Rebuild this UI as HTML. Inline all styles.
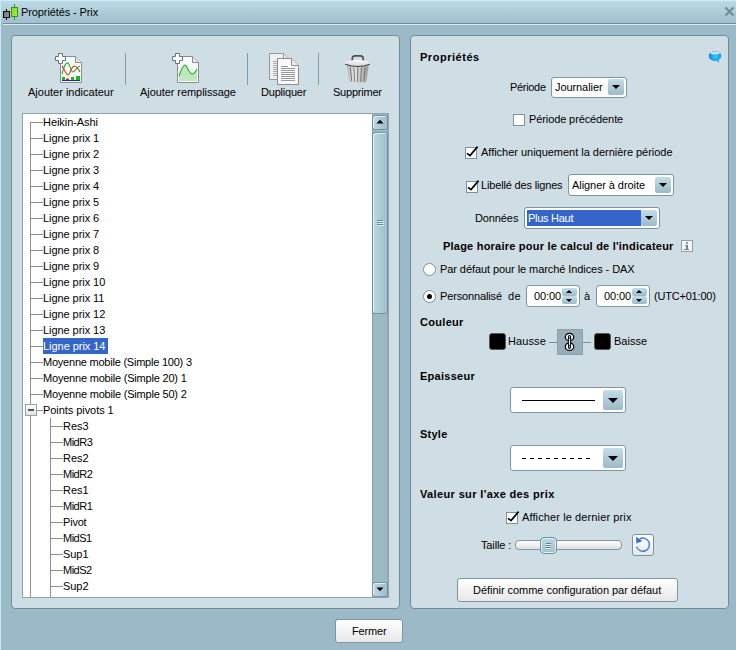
<!DOCTYPE html>
<html><head><meta charset="utf-8"><title>Propriétés - Prix</title>
<style>
html,body{margin:0;padding:0}
body{width:736px;height:650px;overflow:hidden;position:relative;background:#9bb9c7;font-family:"Liberation Sans",sans-serif;font-size:11px;color:#000}
.a{position:absolute;box-sizing:border-box}
.t{position:absolute;white-space:pre;font-size:11px;line-height:13px;color:#000}
.panel{position:absolute;box-sizing:border-box;background:#cfdde4;border:1px solid #718c98;border-radius:4px}
.combo{position:absolute;box-sizing:border-box;background:#fff;border:1px solid #7d959f;border-radius:3px}
.cbtn{position:absolute;box-sizing:border-box;background:linear-gradient(#c3dde8,#9cbac7);border-radius:2px}
.tri{position:absolute;width:0;height:0;border-left:4px solid transparent;border-right:4px solid transparent;border-top:4px solid #000}
.chk{position:absolute;box-sizing:border-box;width:12px;height:12px;background:#fff;border:1px solid #7a929c}
.radio{position:absolute;box-sizing:border-box;width:13px;height:13px;background:#fff;border:1px solid #7890a0;border-radius:50%}
.sep{position:absolute;width:1px;background:#7f9aa6}
.hl{position:absolute;height:1px;background:#8f8f8f}
.vl{position:absolute;width:1px;background:#8f8f8f}
.btn{position:absolute;box-sizing:border-box;border:1px solid #7e96a1;border-radius:3px;background:linear-gradient(#ffffff,#e8e8e8)}
.sbtn{position:absolute;box-sizing:border-box;border:1px solid #7592a0;border-radius:3px;background:linear-gradient(90deg,#bcd9e5,#9ebdca);box-shadow:inset 1px 1px 0 #dcf1f9}
</style></head><body>
<!-- title bar -->
<div class="a" style="left:0;top:0;width:736px;height:23px;background:linear-gradient(#bcdbe7,#a0bfcc)"></div>
<div class="a" style="left:0;top:0;width:736px;height:1px;background:#cdeefa"></div>
<div class="a" style="left:3px;top:23px;width:733px;height:1px;background:#6f8e9b"></div>
<div class="a" style="left:3px;top:24px;width:733px;height:1px;background:#d8f0f8"></div>
<div class="a" style="left:0;top:0;width:1px;height:650px;background:#c8eaf6"></div>
<svg class="a" style="left:0;top:0" width="22" height="22" viewBox="0 0 22 22">
 <defs><linearGradient id="gc" x1="0" y1="0" x2="1" y2="1"><stop offset="0" stop-color="#6a6a6a"/><stop offset="1" stop-color="#a0a0a0"/></linearGradient>
 <linearGradient id="gg" x1="0" y1="0" x2="1" y2="1"><stop offset="0" stop-color="#80d820"/><stop offset="1" stop-color="#a8f048"/></linearGradient></defs>
 <line x1="6.5" y1="9" x2="6.5" y2="20" stroke="#000" stroke-width="1"/>
 <rect x="3.5" y="11.5" width="6" height="6" fill="url(#gc)" stroke="#0a0a0a"/>
 <line x1="14.5" y1="4" x2="14.5" y2="20" stroke="#3a9410" stroke-width="1"/>
 <rect x="11.5" y="7.5" width="6" height="9" fill="url(#gg)" stroke="#3a9410"/>
</svg>
<svg class="a" style="left:722px;top:4px" width="14" height="16" viewBox="0 0 14 16">
 <path d="M3.5 3.5 L11.5 11.5 M11.5 3.5 L3.5 11.5" stroke="#6d8a96" stroke-width="2"/>
</svg>

<!-- panels -->
<div class="panel" style="left:11px;top:35px;width:389px;height:574px"></div>
<div class="panel" style="left:410px;top:35px;width:319px;height:574px"></div>

<!-- toolbar separators -->
<div class="sep" style="left:125px;top:53px;height:32px"></div>
<div class="sep" style="left:247px;top:53px;height:32px"></div>
<div class="sep" style="left:318px;top:53px;height:32px"></div>

<!-- icon: add indicator -->
<svg class="a" style="left:50px;top:50px" width="36" height="36" viewBox="50 50 36 36">
 <path d="M60.5 56.5 H75.5 L81.5 62.5 V82.5 H60.5 Z" fill="#fafafa" stroke="#8c8c8c"/>
 <path d="M75.5 56.5 V62.5 H81.5" fill="#e8e8e8" stroke="#8c8c8c"/>
 <path d="M62 74 C64 66,66 62,68 63 C70 64,71 72,73 72 C75 72,77 67,80 66" fill="none" stroke="#22b022" stroke-width="1.1"/>
 <path d="M62 66 C64 68,66 75,68 75 C70 75,71 67,74 66 C77 66,79 70,80 72" fill="none" stroke="#d23a3a" stroke-width="1.1"/>
 <rect x="62" y="77" width="3" height="3" fill="#10c010"/>
 <rect x="66" y="78.5" width="3" height="1.5" fill="#e02020"/>
 <rect x="71" y="77" width="3" height="3" fill="#10c010"/>
 <rect x="76" y="76" width="4" height="4" fill="#10c010"/>
 <rect x="62" y="80" width="18" height="1" fill="#2020e0"/>
 <path d="M58.5 53.5 H62.5 V56.5 H65.5 V60.5 H62.5 V63.5 H58.5 V60.5 H55.5 V56.5 H58.5 Z" fill="#fff" stroke="#5f7480" stroke-width="1"/>
</svg>
<!-- icon: add fill -->
<svg class="a" style="left:168px;top:50px" width="36" height="36" viewBox="168 50 36 36">
 <path d="M177.5 56.5 H192.5 L198.5 62.5 V82.5 H177.5 Z" fill="#fafafa" stroke="#8c8c8c"/>
 <path d="M192.5 56.5 V62.5 H198.5" fill="#e8e8e8" stroke="#8c8c8c"/>
 <path d="M179 76 C181 70,183 65,185 65 C187 65,189 74,192 74 C194 74,196 71,197 69 V81 H179 Z" fill="#bfe8bf"/>
 <path d="M179 76 C181 70,183 65,185 65 C187 65,189 74,192 74 C194 74,196 71,197 69" fill="none" stroke="#22b022" stroke-width="1.1"/>
 <path d="M175.5 53.5 H179.5 V56.5 H182.5 V60.5 H179.5 V63.5 H175.5 V60.5 H172.5 V56.5 H175.5 Z" fill="#fff" stroke="#5f7480" stroke-width="1"/>
</svg>
<!-- icon: duplicate -->
<svg class="a" style="left:265px;top:50px" width="38" height="38" viewBox="265 50 38 38">
 <path d="M269.5 53.5 H283.5 L289.5 59.5 V79.5 H269.5 Z" fill="#eef1f3" stroke="#9a9a9a"/>
 <path d="M283.5 53.5 V59.5 H289.5" fill="#e4e4e4" stroke="#9a9a9a"/>
 <g stroke="#a8a8a8"><line x1="273" y1="61.5" x2="277" y2="61.5"/><line x1="273" y1="63.5" x2="277" y2="63.5"/><line x1="273" y1="65.5" x2="277" y2="65.5"/><line x1="273" y1="67.5" x2="277" y2="67.5"/><line x1="273" y1="69.5" x2="277" y2="69.5"/><line x1="273" y1="71.5" x2="277" y2="71.5"/><line x1="273" y1="73.5" x2="277" y2="73.5"/><line x1="273" y1="75.5" x2="277" y2="75.5"/></g>
 <path d="M277.5 58.5 H291.5 L298.5 65.5 V84.5 H277.5 Z" fill="#fafafa" stroke="#8c8c8c"/>
 <path d="M291.5 58.5 V65.5 H298.5" fill="#ececec" stroke="#8c8c8c"/>
 <g stroke="#9a9a9a"><line x1="281" y1="66.5" x2="288" y2="66.5"/><line x1="281" y1="68.5" x2="295" y2="68.5"/><line x1="281" y1="70.5" x2="295" y2="70.5"/><line x1="281" y1="72.5" x2="295" y2="72.5"/><line x1="281" y1="74.5" x2="295" y2="74.5"/><line x1="281" y1="76.5" x2="295" y2="76.5"/><line x1="281" y1="78.5" x2="295" y2="78.5"/><line x1="281" y1="80.5" x2="295" y2="80.5"/></g>
</svg>
<!-- icon: trash -->
<svg class="a" style="left:340px;top:50px" width="36" height="36" viewBox="340 50 36 36">
 <defs><linearGradient id="tb" x1="0" x2="1"><stop offset="0" stop-color="#b4b4b4"/><stop offset="0.35" stop-color="#e8e8e8"/><stop offset="1" stop-color="#9c9c9c"/></linearGradient>
 <linearGradient id="tl" x1="0" y1="0" x2="0" y2="1"><stop offset="0" stop-color="#fbfbfb"/><stop offset="1" stop-color="#d0d0d0"/></linearGradient></defs>
 <path d="M352.3 62.5 V58.5 Q352.3 55.8 355 55.8 H360.5 Q363.2 55.8 363.2 58.5 V62.5" fill="none" stroke="#505050" stroke-width="1.65"/>
 <path d="M347 66 L348.8 80.5 Q349.2 82.5 351 82.5 H364.5 Q366.3 82.5 366.7 80.5 L368.5 66 Z" fill="url(#tb)"/>
 <g stroke="#6a6a6a" stroke-width="0.9"><line x1="350.3" y1="67.5" x2="351.8" y2="81.5"/><line x1="353.8" y1="67.5" x2="354.8" y2="82"/><line x1="357.7" y1="67.5" x2="357.7" y2="82"/><line x1="361.5" y1="67.5" x2="360.6" y2="82"/><line x1="365.2" y1="67.5" x2="363.7" y2="81.5"/></g>
 <ellipse cx="357.5" cy="63.4" rx="12.5" ry="3.4" fill="url(#tl)"/>
 <path d="M345.2 64.2 Q357.5 68.8 369.8 64.2" fill="none" stroke="#3e3e3e" stroke-width="1.1"/>
</svg>

<!-- tree box -->
<div class="a" style="left:22px;top:113px;width:367px;height:485px;background:#fff;border:1px solid #8ba3ae"></div>
<!-- selection -->
<div class="a" style="left:43px;top:338px;width:65px;height:16px;background:#3366c8"></div>
<!-- tree lines -->
<div class="vl" style="left:30px;top:122px;height:282px"></div>
<div class="vl" style="left:30px;top:416px;height:181px"></div>
<div class="vl" style="left:50px;top:418px;height:179px"></div>
<div class="hl" style="left:31px;top:122px;width:12px"></div>
<div class="hl" style="left:31px;top:138px;width:12px"></div>
<div class="hl" style="left:31px;top:154px;width:12px"></div>
<div class="hl" style="left:31px;top:170px;width:12px"></div>
<div class="hl" style="left:31px;top:186px;width:12px"></div>
<div class="hl" style="left:31px;top:202px;width:12px"></div>
<div class="hl" style="left:31px;top:218px;width:12px"></div>
<div class="hl" style="left:31px;top:234px;width:12px"></div>
<div class="hl" style="left:31px;top:250px;width:12px"></div>
<div class="hl" style="left:31px;top:266px;width:12px"></div>
<div class="hl" style="left:31px;top:282px;width:12px"></div>
<div class="hl" style="left:31px;top:298px;width:12px"></div>
<div class="hl" style="left:31px;top:314px;width:12px"></div>
<div class="hl" style="left:31px;top:330px;width:12px"></div>
<div class="hl" style="left:31px;top:346px;width:12px"></div>
<div class="hl" style="left:31px;top:362px;width:12px"></div>
<div class="hl" style="left:31px;top:378px;width:12px"></div>
<div class="hl" style="left:31px;top:394px;width:12px"></div>
<div class="hl" style="left:37px;top:410px;width:6px"></div>
<div class="hl" style="left:51px;top:426px;width:12px"></div>
<div class="hl" style="left:51px;top:442px;width:12px"></div>
<div class="hl" style="left:51px;top:458px;width:12px"></div>
<div class="hl" style="left:51px;top:474px;width:12px"></div>
<div class="hl" style="left:51px;top:490px;width:12px"></div>
<div class="hl" style="left:51px;top:506px;width:12px"></div>
<div class="hl" style="left:51px;top:522px;width:12px"></div>
<div class="hl" style="left:51px;top:538px;width:12px"></div>
<div class="hl" style="left:51px;top:554px;width:12px"></div>
<div class="hl" style="left:51px;top:570px;width:12px"></div>
<div class="hl" style="left:51px;top:586px;width:12px"></div>
<div class="a" style="left:25px;top:404px;width:12px;height:12px;border:1px solid #8fa5ae;background:linear-gradient(#fff,#e2e2e2)"></div>
<div class="a" style="left:28px;top:409px;width:6px;height:2px;background:#555"></div>

<!-- scrollbar -->
<div class="a" style="left:372px;top:114px;width:16px;height:483px;background:#9bb8c5;border-left:1px solid #86a0ab;border-right:1px solid #8fa8b2"></div>
<div class="sbtn" style="left:372px;top:115px;width:16px;height:15px"></div>
<svg class="a" style="left:372px;top:115px" width="16" height="15" viewBox="372 115 16 15"><path d="M376.5 123.5 L380 119.7 L383.5 123.5 Z" fill="#000"/></svg>
<div class="sbtn" style="left:372px;top:132px;width:16px;height:182px"></div>
<div class="a" style="left:377px;top:220px;width:6px;height:1px;background:#6f8a96;box-shadow:0 2px 0 #6f8a96,0 4px 0 #6f8a96,1px 1px 0 #dbeef5,1px 3px 0 #dbeef5,1px 5px 0 #dbeef5"></div>
<div class="sbtn" style="left:372px;top:582px;width:16px;height:15px"></div>
<svg class="a" style="left:372px;top:582px" width="16" height="15" viewBox="372 582 16 15"><path d="M376.5 587.5 L380 591.3 L383.5 587.5 Z" fill="#000"/></svg>

<!-- right panel widgets -->
<svg class="a" style="left:706px;top:48px" width="18" height="18" viewBox="706 48 18 18">
 <defs><radialGradient id="bub" cx="0.55" cy="0.6" r="0.6"><stop offset="0" stop-color="#2ad2fa"/><stop offset="1" stop-color="#1479e0"/></radialGradient></defs>
 <path d="M716 59.5 L719 63 L718.2 59" fill="#1a86e4"/>
 <ellipse cx="715" cy="56" rx="6.2" ry="5" fill="url(#bub)"/>
 <ellipse cx="715" cy="52.9" rx="4.6" ry="1.7" fill="#d8f2ff" opacity="0.9"/>
</svg>

<div class="combo" style="left:551px;top:77px;width:76px;height:21px"></div>
<div class="cbtn" style="left:608px;top:79px;width:16px;height:16px"></div>
<div class="tri" style="left:612px;top:85px"></div>

<div class="chk" style="left:513px;top:114px"></div>
<div class="chk" style="left:465px;top:147px"></div>
<svg class="a" style="left:462px;top:144px" width="20" height="16" viewBox="462 144 20 16"><path d="M467 153.3 L470 155.6 L477.6 146.6" fill="none" stroke="#000" stroke-width="1.65"/></svg>
<div class="chk" style="left:466px;top:181px"></div>
<svg class="a" style="left:463px;top:178px" width="20" height="16" viewBox="463 178 20 16"><path d="M468 187.3 L471 189.6 L478.6 180.6" fill="none" stroke="#000" stroke-width="1.65"/></svg>

<div class="combo" style="left:568px;top:174px;width:106px;height:22px"></div>
<div class="cbtn" style="left:655px;top:177px;width:16px;height:16px"></div>
<div class="tri" style="left:659px;top:183px"></div>

<div class="combo" style="left:524px;top:207px;width:136px;height:22px"></div>
<div class="a" style="left:527px;top:210px;width:114px;height:16px;background:#3366c8"></div>
<div class="cbtn" style="left:641px;top:210px;width:16px;height:16px"></div>
<div class="tri" style="left:645px;top:216px"></div>

<div class="a" style="left:681px;top:240px;width:12px;height:12px;border:1px solid #8ea2ab;background:#f6f6f6"></div>
<svg class="a" style="left:681px;top:240px" width="12" height="12" viewBox="681 240 12 12"><rect x="686" y="242" width="2" height="2" fill="#8797a0"/><path d="M685 245 H688 V249 H689 V250 H684 V249 H686 V246 H685 Z" fill="#718390"/></svg>

<div class="radio" style="left:423px;top:263px"></div>
<div class="radio" style="left:423px;top:290px"></div>
<div class="a" style="left:427px;top:294px;width:5px;height:5px;border-radius:50%;background:#000"></div>

<div class="combo" style="left:526px;top:285px;width:54px;height:22px"></div>
<div class="cbtn" style="left:562px;top:288px;width:15px;height:8px"></div>
<div class="cbtn" style="left:562px;top:296px;width:15px;height:8px"></div>
<div class="a" style="left:566px;top:290px;width:0;height:0;border-left:3.5px solid transparent;border-right:3.5px solid transparent;border-bottom:3px solid #000"></div>
<div class="tri" style="left:566px;top:299px;border-left-width:3.5px;border-right-width:3.5px;border-top-width:3px"></div>
<div class="combo" style="left:596px;top:285px;width:54px;height:22px"></div>
<div class="cbtn" style="left:632px;top:288px;width:15px;height:8px"></div>
<div class="cbtn" style="left:632px;top:296px;width:15px;height:8px"></div>
<div class="a" style="left:636px;top:290px;width:0;height:0;border-left:3.5px solid transparent;border-right:3.5px solid transparent;border-bottom:3px solid #000"></div>
<div class="tri" style="left:636px;top:299px;border-left-width:3.5px;border-right-width:3.5px;border-top-width:3px"></div>

<!-- couleur -->
<div class="a" style="left:489px;top:333px;width:17px;height:17px;background:#000;border:1px solid #555;border-radius:3px"></div>
<div class="a" style="left:549px;top:342px;width:8px;height:1px;background:#7d9098"></div>
<div class="a" style="left:557px;top:329px;width:26px;height:26px;background:#97adb7;border:1px solid #8aa0aa"></div>
<svg class="a" style="left:557px;top:329px" width="26" height="26" viewBox="557 329 26 26">
 <ellipse cx="569.5" cy="337" rx="4.1" ry="3.6" fill="#fff" stroke="#000" stroke-width="1.5"/>
 <ellipse cx="569.5" cy="346.7" rx="4.1" ry="3.6" fill="#fff" stroke="#000" stroke-width="1.5"/>
 <ellipse cx="569.5" cy="337" rx="3.35" ry="2.85" fill="#fff"/>
 <ellipse cx="569.5" cy="346.7" rx="3.35" ry="2.85" fill="#fff"/>
 <rect x="567.9" y="334.9" width="3.2" height="14" rx="1.6" fill="#000"/>
 <rect x="568.9" y="335.9" width="1.2" height="2.4" fill="#97adb7"/>
 <rect x="568.9" y="345.5" width="1.2" height="2.4" fill="#97adb7"/>
 <line x1="569.5" y1="338.9" x2="569.5" y2="344.9" stroke="#fff" stroke-width="1.2"/>
</svg>
<div class="a" style="left:583px;top:342px;width:8px;height:1px;background:#7d9098"></div>
<div class="a" style="left:594px;top:333px;width:17px;height:17px;background:#000;border:1px solid #555;border-radius:3px"></div>

<!-- epaisseur / style -->
<div class="combo" style="left:510px;top:387px;width:116px;height:26px"></div>
<div class="a" style="left:522px;top:400px;width:73px;height:1px;background:#000"></div>
<div class="cbtn" style="left:603px;top:390px;width:20px;height:20px"></div>
<div class="tri" style="left:608px;top:398px;border-left-width:5px;border-right-width:5px;border-top-width:5px"></div>
<div class="combo" style="left:510px;top:445px;width:116px;height:26px"></div>
<div class="a" style="left:522px;top:458px;width:70px;height:1px;background:repeating-linear-gradient(90deg,#000 0 4px,transparent 4px 8px)"></div>
<div class="cbtn" style="left:603px;top:448px;width:20px;height:20px"></div>
<div class="tri" style="left:608px;top:456px;border-left-width:5px;border-right-width:5px;border-top-width:5px"></div>

<!-- valeur -->
<div class="chk" style="left:506px;top:512px"></div>
<svg class="a" style="left:503px;top:509px" width="20" height="16" viewBox="503 509 20 16"><path d="M508 518.3 L511 520.6 L518.6 511.6" fill="none" stroke="#000" stroke-width="1.65"/></svg>
<div class="a" style="left:515px;top:540px;width:107px;height:10px;border:1px solid #7f96a1;border-radius:4px;background:linear-gradient(#ffffff,#e0e0e0)"></div>
<div class="a" style="left:540px;top:537px;width:17px;height:17px;border:1px solid #728f9c;border-radius:4px;background:linear-gradient(#bad7e3,#a2c1ce);box-shadow:inset 0 0 0 1px #dcf0f7"></div>
<div class="a" style="left:546px;top:543px;width:5px;height:1px;background:#62808d;box-shadow:0 2px 0 #62808d,0 4px 0 #62808d,0 1px 0 #e4f3f9,0 3px 0 #e4f3f9,0 5px 0 #e4f3f9"></div>
<div class="btn" style="left:632px;top:534px;width:22px;height:22px;border-color:#7a929c"></div>
<svg class="a" style="left:632px;top:534px" width="22" height="22" viewBox="632 534 22 22">
 <path d="M639.6 538.9 A6.6 6.6 0 1 1 636.6 546.6" fill="none" stroke="#3a7be0" stroke-width="1.4"/>
 <path d="M636 536.8 L636.4 543.4 L642.3 541 Z" fill="#2f6fd8"/>
</svg>

<div class="btn" style="left:457px;top:578px;width:221px;height:24px"></div>
<div class="btn" style="left:335px;top:619px;width:68px;height:24px"></div>

<div class="t" style="left:21px;top:6px;letter-spacing:-0.104px;">Propriétés - Prix</div>
<div class="t" style="left:28px;top:86px;">Ajouter indicateur</div>
<div class="t" style="left:140px;top:86px;letter-spacing:-0.068px;">Ajouter remplissage</div>
<div class="t" style="left:261px;top:86px;letter-spacing:-0.212px;">Dupliquer</div>
<div class="t" style="left:333px;top:86px;letter-spacing:-0.219px;">Supprimer</div>
<div class="t" style="left:43px;top:116px;letter-spacing:-0.064px;">Heikin-Ashi</div>
<div class="t" style="left:43px;top:132px;letter-spacing:-0.060px;">Ligne prix 1</div>
<div class="t" style="left:43px;top:148px;letter-spacing:-0.060px;">Ligne prix 2</div>
<div class="t" style="left:43px;top:164px;letter-spacing:-0.060px;">Ligne prix 3</div>
<div class="t" style="left:43px;top:180px;letter-spacing:-0.060px;">Ligne prix 4</div>
<div class="t" style="left:43px;top:196px;letter-spacing:-0.060px;">Ligne prix 5</div>
<div class="t" style="left:43px;top:212px;letter-spacing:-0.060px;">Ligne prix 6</div>
<div class="t" style="left:43px;top:228px;letter-spacing:-0.060px;">Ligne prix 7</div>
<div class="t" style="left:43px;top:244px;letter-spacing:-0.060px;">Ligne prix 8</div>
<div class="t" style="left:43px;top:260px;letter-spacing:-0.060px;">Ligne prix 9</div>
<div class="t" style="left:43px;top:276px;letter-spacing:-0.060px;">Ligne prix 10</div>
<div class="t" style="left:43px;top:292px;letter-spacing:-0.060px;">Ligne prix 11</div>
<div class="t" style="left:43px;top:308px;letter-spacing:-0.060px;">Ligne prix 12</div>
<div class="t" style="left:43px;top:324px;letter-spacing:-0.060px;">Ligne prix 13</div>
<div class="t" style="left:43px;top:340px;letter-spacing:-0.042px;color:#fff">Ligne prix 14</div>
<div class="t" style="left:43px;top:356px;letter-spacing:-0.225px;">Moyenne mobile (Simple 100) 3</div>
<div class="t" style="left:43px;top:372px;letter-spacing:-0.200px;">Moyenne mobile (Simple 20) 1</div>
<div class="t" style="left:43px;top:388px;letter-spacing:-0.200px;">Moyenne mobile (Simple 50) 2</div>
<div class="t" style="left:43px;top:404px;letter-spacing:-0.060px;">Points pivots 1</div>
<div class="t" style="left:63px;top:420px;letter-spacing:-0.060px;">Res3</div>
<div class="t" style="left:63px;top:436px;letter-spacing:-0.500px;">MidR3</div>
<div class="t" style="left:63px;top:452px;letter-spacing:-0.060px;">Res2</div>
<div class="t" style="left:63px;top:468px;letter-spacing:-0.500px;">MidR2</div>
<div class="t" style="left:63px;top:484px;letter-spacing:-0.060px;">Res1</div>
<div class="t" style="left:63px;top:500px;letter-spacing:-0.500px;">MidR1</div>
<div class="t" style="left:63px;top:516px;letter-spacing:-0.200px;">Pivot</div>
<div class="t" style="left:63px;top:532px;letter-spacing:-0.500px;">MidS1</div>
<div class="t" style="left:63px;top:548px;letter-spacing:-0.060px;">Sup1</div>
<div class="t" style="left:63px;top:564px;letter-spacing:-0.500px;">MidS2</div>
<div class="t" style="left:63px;top:580px;letter-spacing:-0.060px;">Sup2</div>
<div class="t" style="left:420px;top:51px;letter-spacing:0.531px;font-weight:bold;">Propriétés</div>
<div class="t" style="left:510px;top:81px;letter-spacing:-0.320px;">Période</div>
<div class="t" style="left:555px;top:81px;letter-spacing:-0.079px;">Journalier</div>
<div class="t" style="left:529px;top:113px;letter-spacing:-0.107px;">Période précédente</div>
<div class="t" style="left:481px;top:146px;letter-spacing:-0.022px;">Afficher uniquement la dernière période</div>
<div class="t" style="left:481px;top:179px;letter-spacing:-0.164px;">Libellé des lignes</div>
<div class="t" style="left:572px;top:179px;letter-spacing:-0.060px;">Aligner à droite</div>
<div class="t" style="left:475px;top:212px;letter-spacing:-0.108px;">Données</div>
<div class="t" style="left:528px;top:212px;letter-spacing:-0.275px;color:#fff">Plus Haut</div>
<div class="t" style="left:443px;top:240px;letter-spacing:0.222px;font-weight:bold;">Plage horaire pour le calcul de l'indicateur</div>
<div class="t" style="left:440px;top:263px;letter-spacing:-0.076px;">Par défaut pour le marché Indices - DAX</div>
<div class="t" style="left:440px;top:290px;letter-spacing:-0.136px;">Personnalisé</div>
<div class="t" style="left:508px;top:290px;letter-spacing:0.350px;">de</div>
<div class="t" style="left:534px;top:290px;letter-spacing:-0.083px;">00:00</div>
<div class="t" style="left:584px;top:290px;">à</div>
<div class="t" style="left:604px;top:290px;letter-spacing:-0.083px;">00:00</div>
<div class="t" style="left:654px;top:290px;letter-spacing:-0.199px;">(UTC+01:00)</div>
<div class="t" style="left:420px;top:316px;letter-spacing:0.306px;font-weight:bold;">Couleur</div>
<div class="t" style="left:508px;top:335px;letter-spacing:0.101px;">Hausse</div>
<div class="t" style="left:614px;top:335px;letter-spacing:0.014px;">Baisse</div>
<div class="t" style="left:420px;top:370px;letter-spacing:0.276px;font-weight:bold;">Epaisseur</div>
<div class="t" style="left:420px;top:428px;letter-spacing:0.251px;font-weight:bold;">Style</div>
<div class="t" style="left:420px;top:488px;letter-spacing:0.365px;font-weight:bold;">Valeur sur l'axe des prix</div>
<div class="t" style="left:522px;top:511px;letter-spacing:0.113px;">Afficher le dernier prix</div>
<div class="t" style="left:481px;top:539px;letter-spacing:-0.141px;">Taille :</div>
<div class="t" style="left:473px;top:584px;letter-spacing:-0.036px;">Définir comme configuration par défaut</div>
<div class="t" style="left:352px;top:625px;letter-spacing:-0.151px;">Fermer</div>
</body></html>
